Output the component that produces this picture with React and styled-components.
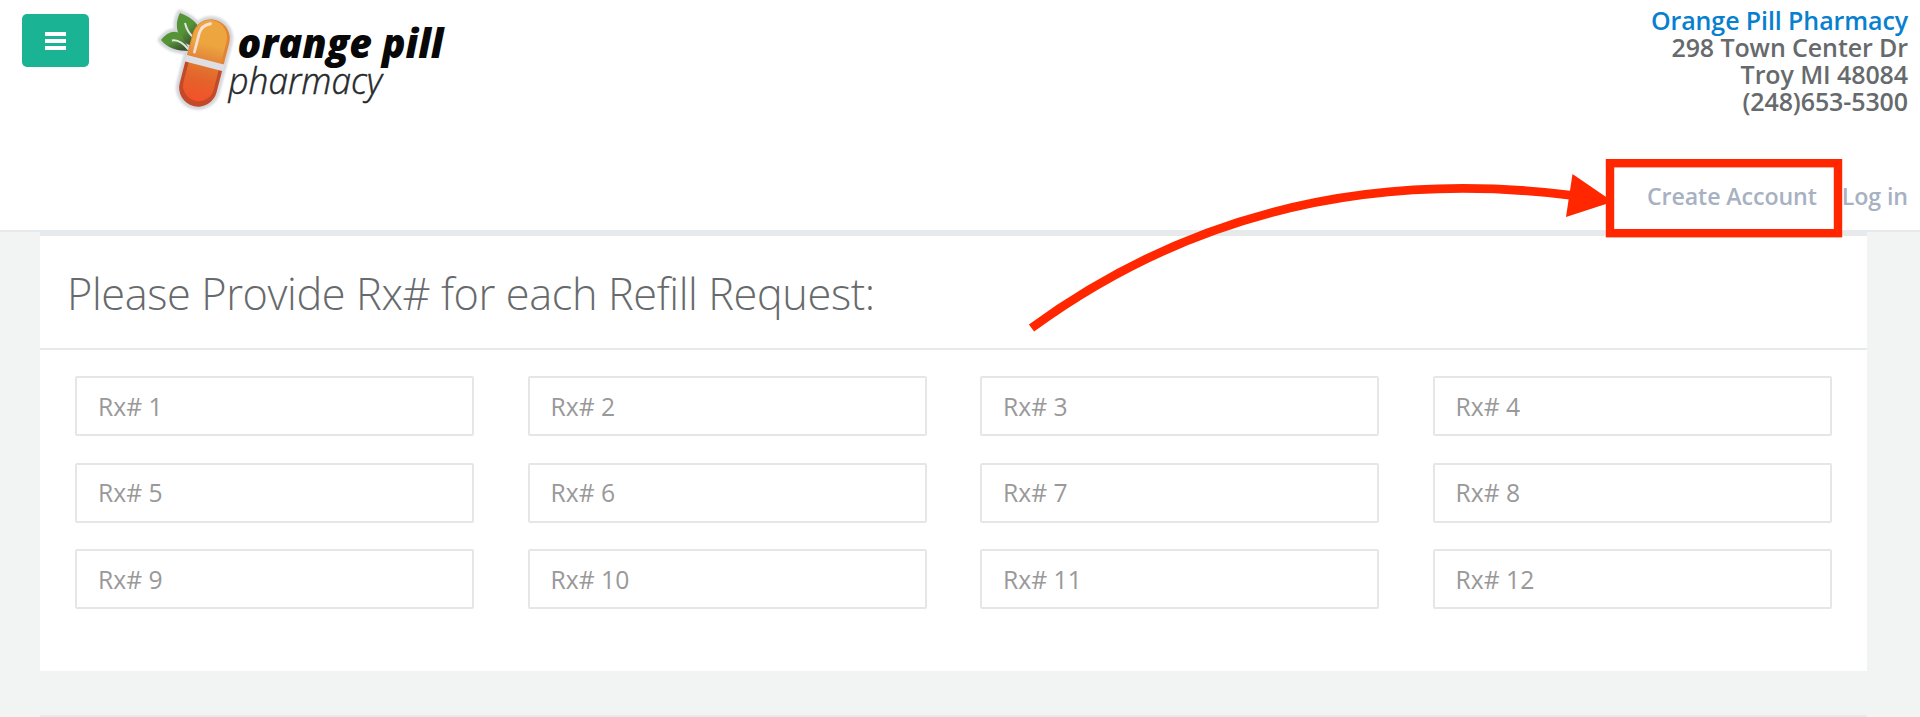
import React from "react";
import styled, { createGlobalStyle } from "styled-components";

const GlobalStyle = createGlobalStyle`
  *, *::before, *::after { box-sizing: border-box; }
  html, body { margin: 0; padding: 0; overflow: hidden; }
  body {
    background: #f2f4f3;
    color: #676a6c;
    font-family: "Open Sans", "Noto Sans", sans-serif;
  }
`;

const Page = styled.div`
  position: relative;
  width: 1920px;
  height: 717px;
  overflow: hidden;
  background: #f2f4f3;
`;

const Header = styled.header`
  display: flex;
  justify-content: space-between;
  height: 232px;
  background: #fff;
  border-bottom: 2px solid #e7eaec;
`;

const Brand = styled.div`
  display: flex;
  align-items: flex-start;
  gap: 65px;
  padding-left: 22px;
`;

const MenuButton = styled.button`
  display: flex;
  flex-direction: column;
  align-items: center;
  justify-content: center;
  gap: 3.5px;
  width: 67px;
  height: 53px;
  margin-top: 14px;
  padding: 1px 0 0;
  border: 0;
  border-radius: 5px;
  background: #1ab394;
`;

const MenuBar = styled.span`
  width: 21px;
  height: 3.7px;
  background: #fff;
`;

const Logo = styled.svg`
  display: block;
  width: 300px;
  height: 120px;
`;

const Contact = styled.div`
  display: flex;
  flex-direction: column;
  justify-content: space-between;
  align-items: flex-end;
  padding: 7px 12px 18px 0;
`;

const Address = styled.address`
  font-style: normal;
  font-weight: 600;
  font-size: 25px;
  letter-spacing: -0.1px;
  line-height: 27.1px;
  text-align: right;
`;

const StoreName = styled.a`
  color: #0880cf;
`;

const AccountNav = styled.nav`
  display: flex;
  gap: 25px;
`;

const NavLink = styled.a`
  color: #a7b1c2;
  font-weight: 600;
  font-size: 23.2px;
  letter-spacing: -0.1px;
  line-height: 32px;
`;

const Panel = styled.section`
  width: 1827px;
  margin: 0 0 44px 40px;
  background: #fff;
  border-top: 4px solid #e7e9eb;
`;

const PanelTitle = styled.h1`
  margin: 0;
  height: 114px;
  padding-left: 27px;
  border-bottom: 2px solid #e7e9ea;
  font-weight: 300;
  font-size: 43.3px;
  letter-spacing: -0.4px;
  line-height: 115px;
  white-space: nowrap;
`;

const RxGrid = styled.div`
  display: grid;
  grid-template-columns: repeat(4, 399px);
  column-gap: 53.5px;
  row-gap: 26.7px;
  height: 321px;
  align-content: start;
  padding: 26px 0 0 35px;
`;

const RxInput = styled.input`
  width: 100%;
  height: 60px;
  padding: 0 0 0 21px;
  border: 2px solid #e5e6e7;
  border-radius: 2px;
  background: #fff;
  font-family: inherit;
  font-size: 24.7px;
  color: #676a6c;
  outline: none;
  &::placeholder { color: #999; opacity: 1; }
`;

const Annotation = styled.svg`
  position: absolute;
  left: 0;
  top: 0;
  pointer-events: none;
`;

const PillLogo = () => (
  <Logo viewBox="154 0 300 120" role="img" aria-label="orange pill pharmacy">
    <defs>
      <linearGradient id="top" x1="0" y1="0" x2="0" y2="1">
        <stop offset="0.6" stopColor="#eda540" />
        <stop offset="1" stopColor="#e38538" />
      </linearGradient>
      <linearGradient id="bottom" x1="0" y1="0" x2="0" y2="1">
        <stop offset="0" stopColor="#e2762f" />
        <stop offset="0.4" stopColor="#e4632b" />
        <stop offset="1" stopColor="#f4502a" />
      </linearGradient>
      <linearGradient id="leaf" x1="0" y1="0" x2="0.6" y2="1">
        <stop offset="0.55" stopColor="#559337" />
        <stop offset="1" stopColor="#39532f" />
      </linearGradient>
      <filter id="soft" x="-20%" y="-20%" width="140%" height="140%">
        <feGaussianBlur stdDeviation="1" />
      </filter>
    </defs>
    <g fill="#d5d7dc" stroke="#d5d7dc" strokeWidth="6.5" strokeLinejoin="round" filter="url(#soft)">
      <path d="M180 13C190 17 195 21 198 26L192 46C178 42 173 26 180 13Z" />
      <path d="M161 40C168 31 177 29 182 36L190 51C177 51 167 48 161 40Z" />
      <rect x="185.5" y="18.5" width="38" height="89" rx="19" transform="rotate(14.5 204.5 63)" />
    </g>
    <path d="M180 13C190 17 195 21 198 26L192 46C178 42 173 26 180 13Z" fill="url(#leaf)" />
    <path d="M161 40C168 31 177 29 182 36L190 51C177 51 167 48 161 40Z" fill="url(#leaf)" />
    <path d="M185 23Q187 32 194 38M172 40.5Q180 39 189 50" fill="none" stroke="#e2e5e3" strokeWidth="2" />
    <g transform="translate(-0.5 0) rotate(14.5 205 63)">
      <path d="M186 60V37.5A19 19 0 0 1 224 37.5V60Z" fill="#e28433" />
      <path d="M187 60V37.5A17 18 0 0 1 221 37.5V60Z" fill="url(#top)" />
      <path d="M186 65.5H224V88.5A19 19 0 0 1 186 88.5Z" fill="#c34a29" />
      <path d="M189.5 65.5H220.5V86.5A15.5 15.5 0 0 1 189.5 86.5Z" fill="url(#bottom)" />
      <path d="M185 59.7H225V66.3H185Z" fill="#dedfe3" />
      <path d="M192.5 55V35Q193 27 201 23.5" fill="none" stroke="#fadfd3" strokeWidth="2.8" strokeLinecap="round" />
    </g>
    <g fontFamily="Open Sans" fontStyle="italic">
      <text x="237.5" y="57.5" fontWeight="800" fontSize="40.5" fill="#080808" textLength="134.5" lengthAdjust="spacingAndGlyphs">orange</text>
      <text x="382" y="57.5" fontWeight="800" fontSize="41.5" fill="#080808" textLength="61.5" lengthAdjust="spacingAndGlyphs">pill</text>
      <text x="228.5" y="94" fontWeight="300" fontSize="37" fill="#25292b" stroke="#25292b" strokeWidth="0.5" textLength="153.5" lengthAdjust="spacingAndGlyphs">pharmacy</text>
    </g>
  </Logo>
);

const rxNumbers = Array.from({ length: 12 }, (_, i) => i + 1);

export default function App() {
  return (
    <Page>
      <GlobalStyle />
      <Header>
        <Brand>
          <MenuButton aria-label="Menu">
            <MenuBar />
            <MenuBar />
            <MenuBar />
          </MenuButton>
          <PillLogo />
        </Brand>
        <Contact>
          <Address>
            <StoreName>Orange Pill Pharmacy</StoreName>
            <br />
            298 Town Center Dr
            <br />
            Troy MI 48084
            <br />
            (248)653-5300
          </Address>
          <AccountNav>
            <NavLink>Create Account</NavLink>
            <NavLink>Log in</NavLink>
          </AccountNav>
        </Contact>
      </Header>
      <Panel>
        <PanelTitle>Please Provide Rx# for each Refill Request:</PanelTitle>
        <RxGrid>
          {rxNumbers.map((n) => (
            <RxInput key={n} placeholder={`Rx# ${n}`} />
          ))}
        </RxGrid>
      </Panel>
      <Panel />
      <Annotation width="1920" height="717" viewBox="0 0 1920 717">
        <path d="M1031.5 328Q1265 157.5 1572 195.3" fill="none" stroke="#ff2600" strokeWidth="8.8" />
        <path d="M1572.5 174L1609 199V203L1566 217Z" fill="#ff2600" />
        <rect x="1610" y="163.2" width="228" height="70" fill="none" stroke="#ff2600" strokeWidth="8.4" />
      </Annotation>
    </Page>
  );
}
